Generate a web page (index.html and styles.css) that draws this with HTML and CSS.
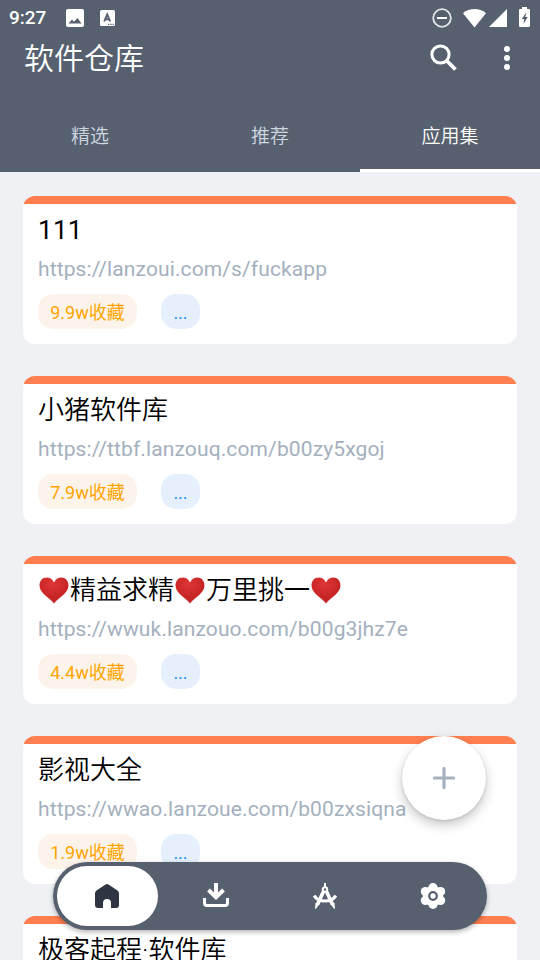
FILE: index.html
```html
<!DOCTYPE html>
<html lang="zh-CN">
<head>
<meta charset="utf-8">
<title>软件仓库</title>
<link rel="stylesheet" href="styles.css">
</head>
<body>
<svg class="defs" width="0" height="0">
  <defs>
    <radialGradient id="red" cx=".45" cy=".25" r=".8"><stop offset="0" stop-color="#df3636"/><stop offset=".6" stop-color="#c92626"/><stop offset="1" stop-color="#bd2222"/></radialGradient>
    <symbol id="heart" viewBox="0 0 30 27"><path fill="url(#red)" d="M15 5.500C13 1.700 10.600 .5 7.800 .5 3.400 .5 .5 3.900 .5 8.300 .5 16.500 10.500 20.500 15 26.500 19.500 20.500 29.500 16.500 29.500 8.300 29.500 3.900 26.600 .5 22.200 .5 19.400 .5 17 1.700 15 5.500Z"/></symbol>
  </defs>
</svg>
<div class="screen">
  <header class="header">
    <div class="status">
      <span class="clock">9:27</span>
      <svg class="photo" width="18" height="18" viewBox="0 0 18 18"><rect width="18" height="18" rx="2" fill="#fff"/><path fill="#56606f" d="M2.500 14.500 6 10.500l2 2.200L11.500 9l4 5.500Z"/></svg>
      <svg class="lang" width="15" height="16" viewBox="0 0 15 16"><rect width="15" height="16" rx="1.500" fill="#fff"/><path fill="none" stroke="#56606f" stroke-width="1.900" d="M4.200 11.500 7.200 4.500l3 7M5.300 9.300h4"/><path stroke="#56606f" stroke-width="1.200" stroke-dasharray="1.300 1" d="M8 14.300h6"/></svg>
      <span class="spacer"></span>
      <svg class="dnd" width="20" height="20" viewBox="0 0 20 20"><circle cx="10" cy="10" r="8.800" fill="none" stroke="#e3e5e8" stroke-width="1.800"/><path stroke="#fff" stroke-width="2" d="M5 10h10"/></svg>
      <svg class="wifi" width="23" height="19" viewBox="0 0 23 19"><path fill="#fff" d="M0 4.200C6.500-1.300 16.500-1.300 23 4.200L11.500 18.500Z"/></svg>
      <svg class="signal" width="18" height="18" viewBox="0 0 18 18"><path fill="#fff" d="M18 0v18H0Z"/></svg>
      <svg class="battery" width="11" height="20" viewBox="0 0 11 20"><path fill="#fff" d="M3 0h5v2h2q1 0 1 1v16q0 1-1 1H1q-1 0-1-1V3q0-1 1-1h2Z"/><path fill="#56606f" d="M7.500 5 2.800 12h2.400l-.7 5 4.200-7H6.300Z"/></svg>
    </div>
    <div class="toolbar">
      <h1>软件仓库</h1>
      <svg class="search" width="28" height="28" viewBox="0 0 28 28"><circle cx="10.500" cy="10.500" r="8.600" fill="none" stroke="#fff" stroke-width="3"/><path stroke="#fff" stroke-width="3.800" d="m16.500 16.500 9 9"/></svg>
      <svg class="more" width="6" height="26" viewBox="0 0 6 26"><g fill="#fff"><circle cx="3" cy="4" r="3"/><circle cx="3" cy="13" r="3"/><circle cx="3" cy="22" r="3"/></g></svg>
    </div>
    <nav class="tabs"><span>精选</span><span>推荐</span><span class="current">应用集</span></nav>
  </header>
  <main class="list">
    <article class="card"><h2 class="wide">111</h2><p>https://lanzoui.com/s/fuckapp</p><div class="chips"><span class="fav">9.9w收藏</span><span class="etc">...</span></div></article>
    <article class="card"><h2>小猪软件库</h2><p>https://ttbf.lanzouq.com/b00zy5xgoj</p><div class="chips"><span class="fav">7.9w收藏</span><span class="etc">...</span></div></article>
    <article class="card"><h2><svg class="heart"><use href="#heart"/></svg>精益求精<svg class="heart"><use href="#heart"/></svg>万里挑一<svg class="heart"><use href="#heart"/></svg></h2><p>https://wwuk.lanzouo.com/b00g3jhz7e</p><div class="chips"><span class="fav">4.4w收藏</span><span class="etc">...</span></div></article>
    <article class="card"><h2>影视大全</h2><p>https://wwao.lanzoue.com/b00zxsiqna</p><div class="chips"><span class="fav">1.9w收藏</span><span class="etc">...</span></div></article>
    <article class="card"><h2>极客起程·软件库</h2></article>
  </main>
  <div class="fab"><svg width="22" height="22" viewBox="0 0 22 22"><path stroke="#a6b1bf" stroke-width="3.200" stroke-linecap="round" d="M11 1.500v19M1.500 11h19"/></svg></div>
  <nav class="dock">
    <span class="item active"><svg width="24" height="26" viewBox="0 0 24 26"><path fill="#2f3542" d="M10.500 1.400q1.500-1 3 0l9 6.100Q24 8.600 24 10.500V22q0 3-3 3h-5v-5q0-4-4-4t-4 4v5H3q-3 0-3-3V10.500Q0 8.600 1.500 7.500Z"/></svg></span>
    <span class="item"><svg width="26" height="26" viewBox="0 0 26 26"><path fill="none" stroke="#fff" stroke-width="4" d="M13 0v14M5.500 7 13 14.300 20.500 7"/><path fill="none" stroke="#fff" stroke-width="3" d="M1.500 15v5q0 2.500 2.500 2.500h18q2.500 0 2.500-2.500v-5"/></svg></span>
    <span class="item right"><svg width="24" height="26" viewBox="0 0 24 26"><g fill="none" stroke="#fff"><path stroke-width="2" d="M12 0v5"/><circle cx="12" cy="6.500" r="2.200" stroke-width="2"/><path stroke-width="3.600" d="M10.500 8.500 4.500 21.500M13.500 8.500l6 13"/><path stroke-width="1" fill="#fff" d="m3 20 2.800 1.300L2.600 25.500ZM21 20l-2.800 1.300 3.200 4.200Z"/><path stroke-width="3.200" d="M1.200 12.500q3 5.500 10.800 5.500t10.800-5.500"/></g></svg></span>
    <span class="item right"><svg width="26" height="26" viewBox="0 0 26 26"><g fill="#fff"><circle cx="13" cy="13" r="10"/><circle cx="13" cy="4.700" r="4.700"/><circle cx="13" cy="21.300" r="4.700"/><circle cx="5.500" cy="8.600" r="4.700"/><circle cx="20.500" cy="8.600" r="4.700"/><circle cx="5.500" cy="17.400" r="4.700"/><circle cx="20.500" cy="17.400" r="4.700"/></g><circle cx="13" cy="13" r="3.800" fill="none" stroke="#56606f" stroke-width="2.200"/></svg></span>
  </nav>
</div>
</body>
</html>
```

FILE: styles.css
```css
* { box-sizing: border-box; }
body { margin: 0; font-family: Roboto, "Noto Sans CJK SC", sans-serif; }
svg { display: block; flex: none; }
.defs { position: absolute; }
.screen { position: relative; width: 540px; height: 960px; overflow: hidden; background: #eff1f5; }
.header { height: 172px; background: #57606f; color: #fff; }
.status { display: flex; align-items: center; height: 36px; padding: 0 10px 0 9px; }
.clock { width: 57px; font-size: 19px; font-weight: 500; line-height: 36px; }
.lang { margin-left: 16px; }
.spacer { flex: 1; }
.wifi { margin: 0 3px 0 11px; }
.battery { margin: -2px 0 0 12px; }
.toolbar { display: flex; align-items: center; height: 44px; padding: 0 30px 0 24px; }
h1 { margin: 0 auto 0 0; padding-top: 2px; font-size: 30px; font-weight: 350; line-height: 44px; }
.more { margin-left: 46px; }
.tabs { display: flex; height: 92px; font-size: 19px; font-weight: 350; line-height: 28px; text-align: center; color: #ced6e0; }
.tabs span { flex: 1; padding-top: 43px; }
.tabs .current { color: #fff; border-bottom: 3px solid #fff; }
.list { display: flex; flex-direction: column; gap: 32px; padding: 24px 23px; }
.card { flex: none; height: 148px; padding: 16px 15px 0; border-radius: 12px; background: linear-gradient(#ff7f50 8px, #fff 8px); }
h2 { display: flex; align-items: center; margin: 0; height: 36px; font-size: 26px; font-weight: 350; line-height: 36px; color: #000; white-space: nowrap; }
h2.wide { font-weight: 400; letter-spacing: .3px; }
.heart { width: 30px; height: 27px; margin: 0 1px; }
.card p { margin: 6px 0 0; font-size: 21px; line-height: 30px; letter-spacing: .12px; color: #a4b0be; white-space: nowrap; }
.chips { display: flex; gap: 24px; margin-top: 10px; font-size: 18px; font-weight: 400; line-height: 37px; text-align: center; }
.chips span { height: 35px; border-radius: 15px; white-space: nowrap; }
.fav { width: 99px; background: #fcf4ea; color: #ffa502; }
.etc { width: 39px; background: #e5f0fc; color: #1e90ff; }
.fab { position: absolute; left: 402px; top: 736px; width: 84px; height: 84px; display: flex; align-items: center; justify-content: center; border-radius: 50%; background: #fff; box-shadow: 0 5px 12px rgba(0,0,0,.22), 0 1px 3px rgba(0,0,0,.12); }
.dock { position: absolute; left: 53px; top: 862px; width: 434px; height: 68px; display: flex; justify-content: space-between; padding: 4px; border-radius: 34px; background: #57606f; box-shadow: 0 2px 5px rgba(0,0,0,.3); }
.item { width: 101px; display: flex; align-items: center; justify-content: center; border-radius: 30px; }
.active { padding-right: 2px; background: #fff; }
.right { padding-left: 2px; }
```
